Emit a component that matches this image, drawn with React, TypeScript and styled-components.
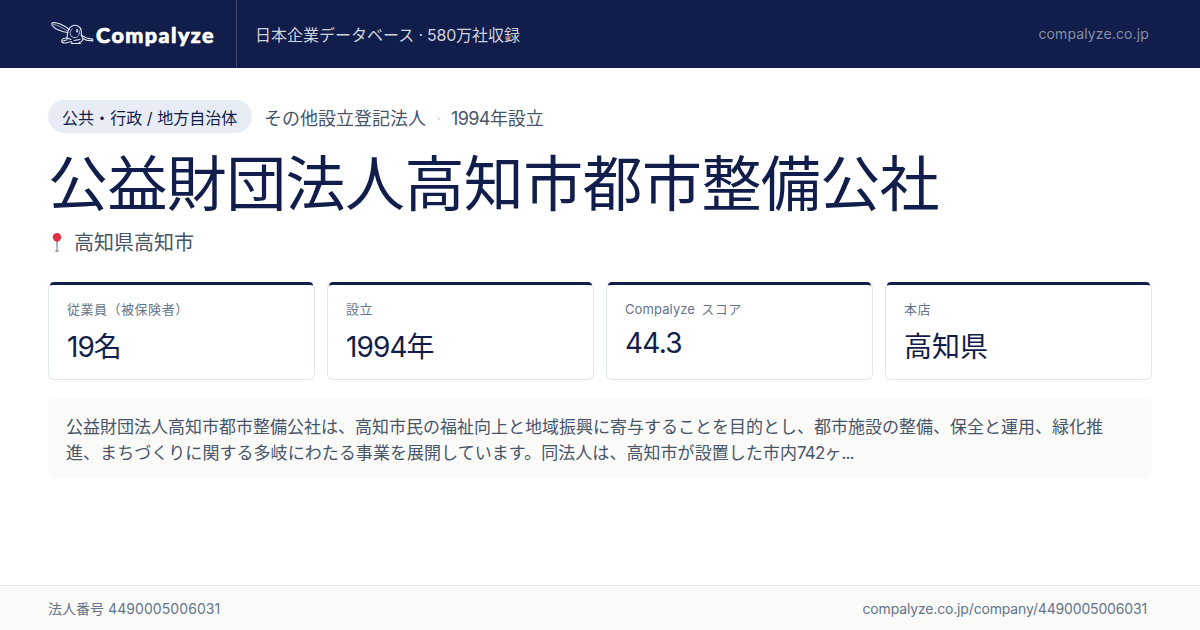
import React from "react";
import styled, { createGlobalStyle } from "styled-components";

const navy = "#111d4a";
const slate = "#475569";
const muted = "#64748b";

const GlobalStyle = createGlobalStyle`
  * { box-sizing: border-box; }
  body {
    margin: 0;
    font-family: Inter, "Noto Sans CJK JP", sans-serif;
    font-weight: 400;
    background: #ffffff;
  }
`;

const Page = styled.div`
  width: 1200px;
  height: 630px;
  display: flex;
  flex-direction: column;
  overflow: hidden;
  white-space: nowrap;
`;

const Header = styled.header`
  height: 68px;
  display: flex;
  align-items: center;
  padding: 0 51px 0 50px;
  background: ${navy};
`;

const Brand = styled.div`
  width: 187px;
  height: 68px;
  display: flex;
  align-items: center;
  border-right: 1px solid #414a6e;
`;

const Wordmark = styled.span`
  margin-left: 2px;
  padding-top: 1px;
  font-family: Lato, sans-serif;
  font-weight: 900;
  font-size: 21.5px;
  line-height: 30px;
  letter-spacing: 1.45px;
  -webkit-text-stroke: 0.7px #ffffff;
  color: #ffffff;
`;

const Tagline = styled.span`
  margin-left: 18px;
  padding-top: 2px;
  font-size: 16px;
  line-height: 24px;
  color: #cfd2db;
`;

const Domain = styled.span`
  margin-left: auto;
  font-size: 14px;
  line-height: 20px;
  letter-spacing: 0.13px;
  color: #888ea5;
`;

const Latin = styled.span<{ $spacing: number; $after?: number }>`
  letter-spacing: ${(p) => p.$spacing}px;
  margin-right: ${(p) => p.$after ?? 0}px;
`;

const Main = styled.main`
  flex: 1;
  display: flex;
  flex-direction: column;
  padding: 32px 48px 0;
`;

const MetaRow = styled.div`
  height: 33px;
  display: flex;
  align-items: center;
  font-size: 18px;
  line-height: 30px;
  color: ${slate};
`;

const MetaText = styled.span`
  padding-top: 5px;
`;

const Chip = styled.span`
  width: 204px;
  height: 33px;
  margin-right: 12px;
  padding: 0 14px;
  border-radius: 17px;
  background: #e8ecf5;
  color: ${navy};
  font-size: 16px;
  line-height: 36px;
  letter-spacing: 0.05px;
`;

const Separator = styled.span`
  width: 25px;
  padding-top: 4px;
  text-align: center;
  color: #cbd5e1;
`;

const Title = styled.h1`
  margin: 13px 0 0;
  height: 76px;
  font-size: 60px;
  line-height: 76px;
  font-weight: 400;
  letter-spacing: -0.6px;
  color: ${navy};
`;

const Location = styled.div`
  display: flex;
  align-items: center;
  height: 28px;
  margin-top: 7px;
  font-size: 20px;
  line-height: 28px;
  color: ${slate};
`;

const PinSlot = styled.span`
  display: flex;
  width: 26px;
`;

const Cards = styled.section`
  display: grid;
  grid-template-columns: repeat(4, 1fr);
  gap: 12px;
  margin-top: 25px;
`;

const Card = styled.div`
  position: relative;
  height: 98px;
  padding: 16px 18px 0;
  border: 1px solid #e2e8f0;
  border-top-color: transparent;
  border-radius: 6px;
  background: #ffffff;
`;

const CardAccent = styled.span`
  position: absolute;
  top: -1px;
  left: 1px;
  right: 1px;
  height: 4px;
  border-top: 3px solid ${navy};
  border-radius: 4px 4px 0 0;
`;

const CardLabel = styled.div`
  font-size: 13px;
  line-height: 20px;
  letter-spacing: 0.52px;
  color: ${muted};
`;

const CardValue = styled.div<{ $numeric?: boolean }>`
  margin-top: ${(p) => (p.$numeric ? 4 : 8)}px;
  font-size: 28px;
  line-height: 40px;
  color: ${navy};
`;

const Description = styled.p`
  margin: 18px 0 0;
  height: 80px;
  padding: 16px 18px 0;
  border-radius: 6px;
  background: #fafaf8;
  font-size: 17px;
  line-height: 26.35px;
  color: ${slate};
`;

const Footer = styled.footer`
  height: 45px;
  display: flex;
  align-items: center;
  justify-content: space-between;
  padding: 1px 53px 0 48px;
  border-top: 1px solid #e2e8f0;
  background: #fafaf8;
  font-size: 14px;
  line-height: 20px;
  color: ${muted};
`;

const BirdLogo = () => (
  <svg width="44" height="26" viewBox="0 0 44 26" fill="none" stroke="#e4e7ef" strokeWidth="1.1" strokeLinecap="round" strokeLinejoin="round">
    <path d="M19 8.500C14 4 6 .8 2.400 1.800C.2 2.800 3.400 6.800 8 8.800C11.800 10.400 15.500 11.400 17.600 11.500" />
    <path d="M3.500 3.300C8 4.300 13 7 17.500 10.200" strokeWidth=".7" />
    <path d="M17 17.500C17.200 12 18 6.800 22 4.900C26 3.200 30.500 5.400 31.200 9.700C31.600 12.500 30.800 14 32.200 16C33.800 18.500 32.500 21.200 29 21.500" />
    <path d="M22 8C19 11 19.500 15 23.500 16.500C28 17.500 30.500 13 29 9.500" strokeWidth=".8" />
    <path d="M27 8.800V10.800" strokeWidth="1.600" />
    <path d="M17.200 17C14.500 16.800 12 18 11.700 19.500C11.300 22 14 22.600 17.500 21.500C20.500 20.300 22.800 20.500 21.500 22.500H30.500M17.200 17L21 18.500M13 20L17 18.700M24 19.500L30 18.500" />
    <path d="M31.200 14.200L36.500 17L42.700 18.100V19.900L36 19.100L32.800 17.400" />
  </svg>
);

const Pin = () => (
  <svg width="18" height="22" viewBox="0 0 18 22">
    <path d="M8 9h2l-.35 9h-1.300z" fill="#99aab5" />
    <ellipse cx="9" cy="18.900" rx="2.100" ry=".75" fill="#66757f" />
    <circle cx="9" cy="5.300" r="4.200" fill="#dd2e44" />
  </svg>
);

export default function App() {
  return (
    <Page>
      <GlobalStyle />
      <Header>
        <Brand>
          <BirdLogo />
          <Wordmark>Compalyze</Wordmark>
        </Brand>
        <Tagline>
          日本企業データベース<Latin $spacing={-0.25}> · 580</Latin>万社収録
        </Tagline>
        <Domain>compalyze.co.jp</Domain>
      </Header>
      <Main>
        <MetaRow>
          <Chip>公共・行政 / 地方自治体</Chip>
          <MetaText>その他設立登記法人</MetaText>
          <Separator>·</Separator>
          <MetaText>
            <Latin $spacing={-0.6}>1994</Latin>年設立
          </MetaText>
        </MetaRow>
        <Title>公益財団法人高知市都市整備公社</Title>
        <Location>
          <PinSlot>
            <Pin />
          </PinSlot>
          高知県高知市
        </Location>
        <Cards>
          <Card>
            <CardAccent />
            <CardLabel>従業員（被保険者）</CardLabel>
            <CardValue>
              <Latin $spacing={-1}>19</Latin>名
            </CardValue>
          </Card>
          <Card>
            <CardAccent />
            <CardLabel>設立</CardLabel>
            <CardValue>
              <Latin $spacing={-0.9}>1994</Latin>年
            </CardValue>
          </Card>
          <Card>
            <CardAccent />
            <CardLabel>
              <Latin $spacing={0.1} $after={2}>Compalyze</Latin> スコア
            </CardLabel>
            <CardValue $numeric>
              <Latin $spacing={-0.8}>44.3</Latin>
            </CardValue>
          </Card>
          <Card>
            <CardAccent />
            <CardLabel>本店</CardLabel>
            <CardValue>高知県</CardValue>
          </Card>
        </Cards>
        <Description>
          公益財団法人高知市都市整備公社は、高知市民の福祉向上と地域振興に寄与することを目的とし、都市施設の整備、保全と運用、緑化推
          <br />
          <Latin $spacing={0.05}>進、まちづくりに関する多岐にわたる事業を展開しています。同法人は、高知市が設置した市内</Latin>
          <Latin $spacing={-0.8}>742</Latin>ヶ<Latin $spacing={-0.9}>...</Latin>
        </Description>
      </Main>
      <Footer>
        <span>
          法人番号<Latin $spacing={0.08}> 4490005006031</Latin>
        </span>
        <Latin $spacing={-0.16}>compalyze.co.jp/company/4490005006031</Latin>
      </Footer>
    </Page>
  );
}
